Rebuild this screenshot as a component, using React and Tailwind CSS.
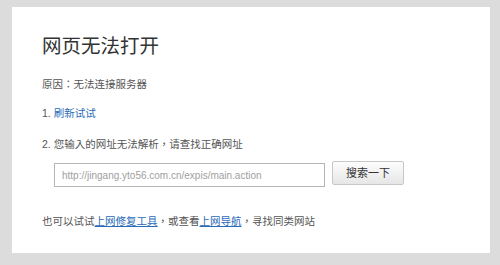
import React from 'react';

const font = { fontFamily: '"Liberation Sans", "Noto Sans CJK TC", "Noto Sans CJK SC", sans-serif' };

export default function App() {
  return (
    <div className="w-[500px] h-[265px] bg-[#dcdcdc] pt-[7px] pl-[12px] pr-[10px]" style={font}>
      <div className="h-[246px] bg-white pl-[30px] pt-[29px] text-[#555] text-[10.5px]">
        <h1 className="text-[19.5px] leading-[20px] text-[#333] font-normal">网页无法打开</h1>
        <p className="mt-[20px] leading-[16px]">原因：无法连接服务器</p>
        <p className="mt-[13px] leading-[16px]">1. <a className="text-[#2a6ab8]">刷新试试</a></p>
        <p className="mt-[15px] leading-[16px]">2. 您输入的网址无法解析，请查找正确网址</p>

        <div className="mt-[9px] ml-[12px] flex items-start">
          <input
            className="mt-[2px] w-[271px] h-[24px] border border-[#b5b5b5] px-[7px] text-[10px] text-[#a0a0a0] outline-none"
            defaultValue="http://jingang.yto56.com.cn/expis/main.action"
            style={font}
          />
          <button
            className="ml-[7px] w-[72px] h-[24px] border border-[#c8c8c8] rounded-[2px] bg-gradient-to-b from-[#fdfdfd] to-[#e6e6e6] text-[11px] text-[#333]"
            style={font}
          >
            搜索一下
          </button>
        </div>

        <p className="mt-[26px] leading-[16px]">
          也可以试试<a className="text-[#2a6ab8] underline">上网修复工具</a>，或查看<a className="text-[#2a6ab8] underline">上网导航</a>，寻找同类网站
        </p>
      </div>
    </div>
  );
}
